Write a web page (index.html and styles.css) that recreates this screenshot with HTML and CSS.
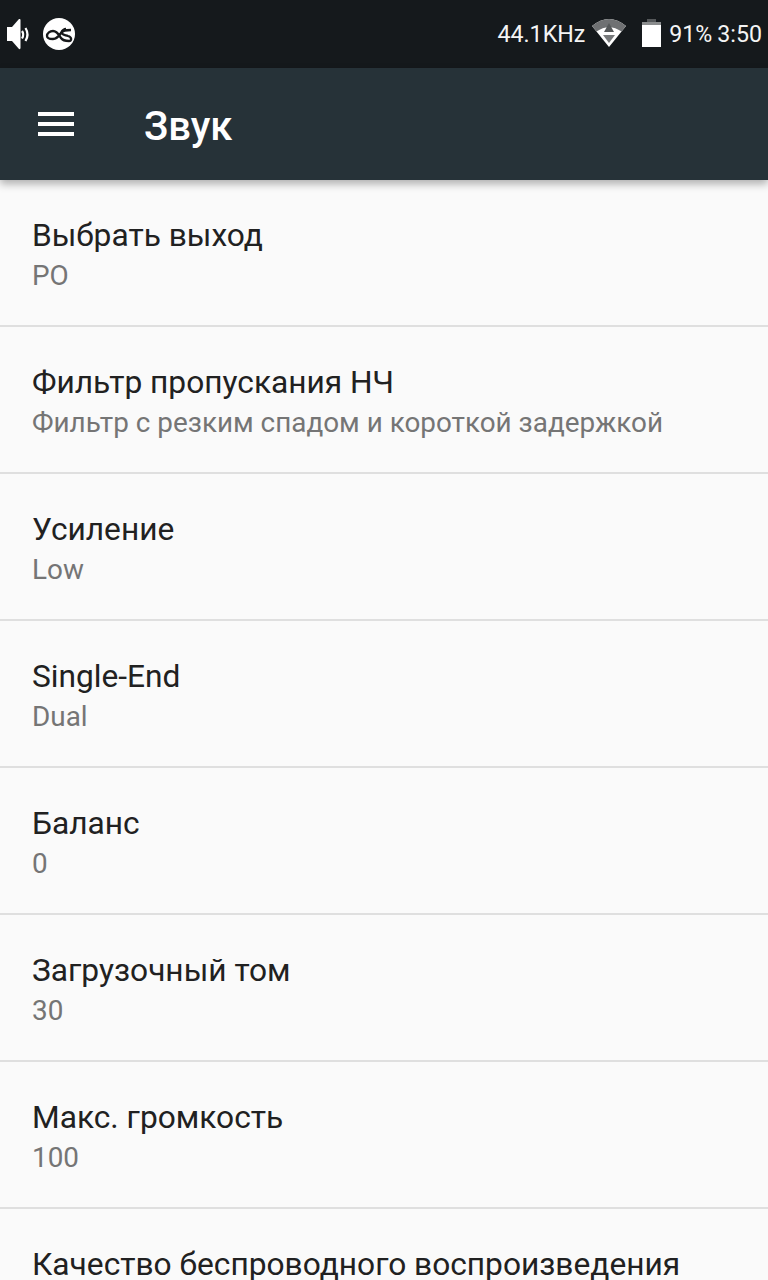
FILE: index.html
```html
<!DOCTYPE html>
<html lang="ru">
<head>
<meta charset="utf-8">
<title>Звук</title>
<link rel="stylesheet" href="styles.css">
</head>
<body>
<div class="screen">
  <div class="status">
    <div class="status-left">
      <svg class="ic-vol" viewBox="7 18 24 32" width="24" height="32"><path d="M7 27h5l7-8q1.500-.5 1.500 1v28q0 1.500-1.500 1l-7-8H7z" fill="#fff"/><path d="M22 31q2.500 3.500 0 7.500" fill="none" stroke="#fff" stroke-width="2.200"/><path d="M25.500 28q4 6.500 0 13" fill="none" stroke="#fff" stroke-width="2.200"/></svg>
      <svg class="ic-app" viewBox="43 18 32 32" width="32" height="32"><circle cx="59" cy="34" r="16" fill="#fff"/><path d="M47 36c0-3 3-5 6-5 4 0 6 4 8 7 2 3 5 3 8 3 3 0 3-4-1-5-3-1-6-1-6-3 0-2 3-3 9-3M47 36c0 2 3 3 6 3 4 0 6-3 8-6 1-2 3-4 5-4" fill="none" stroke="#17191b" stroke-width="2.300"/></svg>
    </div>
    <div class="status-right">
      <span class="st-text">44.1KHz</span>
      <svg class="ic-wifi" viewBox="0 0 34 30" width="34" height="30"><path d="M0 7Q17-7 34 7L17 28z" fill="#fff"/><path d="M0 7Q17-7 34 7L29.500 12.500Q17 4 4.500 12.500z" fill="#6f7173"/><path d="M17 4l5 9H12z" fill="#55585a"/><path d="M11 16h12l-6 8z" fill="#77797b"/></svg>
      <svg class="ic-batt" viewBox="0 0 19 30" width="19" height="30"><path d="M5 0h9v3H5z" fill="#55585a"/><path d="M0 3h19v3H0z" fill="#8a8c8d"/><path d="M0 6h19v22H0z" fill="#fff"/></svg>
      <span class="st-text st-pct">91%</span>
      <span class="st-text">3:50</span>
    </div>
  </div>
  <header class="appbar">
    <div class="menu"><span></span><span></span><span></span></div>
    <h1>Звук</h1>
  </header>
  <main class="list">
    <div class="row"><div class="t">Выбрать выход</div><div class="s">PO</div></div>
    <div class="row"><div class="t">Фильтр пропускания НЧ</div><div class="s">Фильтр с резким спадом и короткой задержкой</div></div>
    <div class="row"><div class="t">Усиление</div><div class="s">Low</div></div>
    <div class="row"><div class="t">Single-End</div><div class="s">Dual</div></div>
    <div class="row"><div class="t">Баланс</div><div class="s">0</div></div>
    <div class="row"><div class="t">Загрузочный том</div><div class="s">30</div></div>
    <div class="row"><div class="t">Макс. громкость</div><div class="s">100</div></div>
    <div class="row"><div class="t">Качество беспроводного воспроизведения</div></div>
  </main>
</div>
</body>
</html>
```
FILE: styles.css
```css
html, body { margin: 0; padding: 0; }
body { background: #fafafa; font-family: Roboto, "Noto Sans", sans-serif; }
.screen { width: 768px; height: 1280px; overflow: hidden; display: flex; flex-direction: column; background: #fafafa; }
.status { height: 68px; flex: none; background: #15191c; display: flex; justify-content: space-between; align-items: center; color: #fff; padding: 0 6px 0 7px; box-sizing: border-box; }
.status-left { display: flex; align-items: center; gap: 12px; }
.ic-vol, .ic-app, .ic-wifi, .ic-batt { display: block; }
.status-right { display: flex; align-items: center; }
.st-text { font-size: 23.200px; color: #f4f4f4; }
.ic-wifi { margin: 0 16px 0 7px; }
.ic-batt { margin-right: 8px; }
.st-pct { margin-right: 5px; }
.appbar { height: 112px; flex: none; background: #263238; display: flex; align-items: center; box-shadow: 0 4px 8px rgba(0,0,0,.3); position: relative; padding-left: 38px; box-sizing: border-box; }
.menu { width: 36px; display: flex; flex-direction: column; gap: 6px; }
.menu span { display: block; height: 4px; background: #fff; }
.appbar h1 { margin: 6px 0 0 70px; font-size: 40px; font-weight: 500; color: #fff; line-height: 1; }
.list { flex: 1; }
.row { height: 147px; box-sizing: border-box; border-bottom: 2px solid #dfdfdf; padding: 0 32px; display: flex; flex-direction: column; }
.t { font-size: 31.700px; line-height: 40px; color: #212121; padding-top: 36px; white-space: nowrap; }
.s { font-size: 27.870px; line-height: 36px; color: #757575; margin-top: 2px; white-space: nowrap; }
```
